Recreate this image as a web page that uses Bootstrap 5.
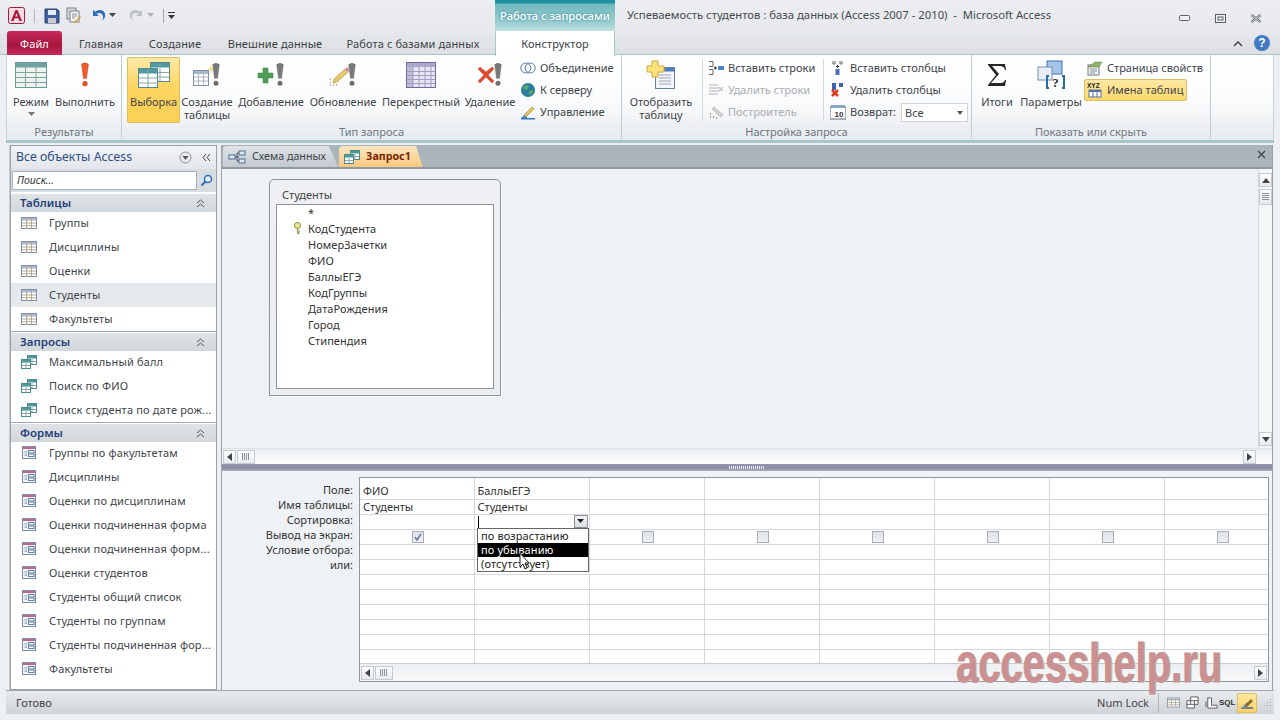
<!DOCTYPE html>
<html lang="ru">
<head>
<meta charset="utf-8">
<title>Access</title>
<link rel="stylesheet" href="https://cdn.jsdelivr.net/npm/bootstrap@5.3.0/dist/css/bootstrap.min.css">
<style>
html,body{margin:0;width:1280px;height:720px;overflow:hidden}
body{background:#edf0f3;font-family:"Noto Sans","Open Sans",sans-serif;font-size:11px;color:#3b4148;line-height:1.2;position:relative}
svg{display:block;flex:none}
.win{width:1280px;height:720px;display:flex;flex-direction:column}
.titlebar{height:31px;background:linear-gradient(#eceef1,#e6e8eb);display:flex;align-items:center;flex:none}
.qat{padding-left:8px;gap:5px;width:495px}
.ctx{width:120px;height:31px;background:linear-gradient(#1d8fa0 0 3px,#6fb7bd 4px,#a4d4d6 26px,#c6e4e4);color:#fff;font-size:11.2px;font-weight:500;text-align:center;line-height:32px;text-shadow:0 0 3px #2d7f8c}
.wintitle{padding-left:12px;font-size:11.3px;color:#454a50;margin-top:-2px;flex:1}
.winbtn{gap:24px;padding-right:18px;margin-top:6px}
.tabs{height:24px;background:linear-gradient(#e6e8eb,#dcdfe3);display:flex;flex:none;position:relative;border-bottom:1px solid #a9c5ca;padding-left:7px}
.tab{font-size:11px;height:24px;line-height:25px;text-align:center;color:#3a3f45;letter-spacing:.01em;flex:none}
.t-file{width:55px;background:linear-gradient(#c92a5c,#a6173f 60%,#c5295a);color:#fff;border-radius:3px 3px 0 0;font-size:11px}
.t1{width:78px}.t2{width:70px}.t3{width:130px}.t4{width:146px}
.t-act{width:120px;height:25px;background:linear-gradient(#fff,#fdfefe);border:1px solid #a9c5ca;border-top:0;border-bottom:0;margin-left:9px;color:#3a3f45;position:relative;z-index:2}
.qhelp{position:absolute;right:10px;top:4px;gap:11px;display:flex;align-items:center}
.ribbon{height:85px;flex:none;background:linear-gradient(#fff 0,#fafbfc 55%,#e6eaee);border-left:1px solid #c5d3d6;margin-left:6px;margin-right:6px;display:flex;border-right:1px solid #c5d3d6}
.group{height:84px;position:relative;display:flex;border-right:1px solid #bcd0d3;padding-top:2px;flex:none}
.g-label{position:absolute;left:0;right:0;bottom:-1px;height:16px;text-align:center;color:#6d767e;font-size:11px;line-height:16px}
.g1{width:115px;padding-left:1px}.g2{width:500px;padding-left:5px}.g3{width:350px;padding-left:4px}.g4{width:239px}
.big{display:flex;flex-direction:column;align-items:center;text-align:center;height:66px;padding-top:5px;border-radius:2px;color:#3e444a;flex:none}
.big .ic{height:26px;display:flex;align-items:center;justify-content:center;margin-bottom:7px;flex:none}
.big small{font-size:11px;line-height:13px}
.b-on{background:linear-gradient(#fde9a8,#fdd661 45%,#fbcf55);box-shadow:inset 0 0 0 1px #e0bc62;color:#3e444a}
.w46{width:46px}.w62{width:62px}.w53{width:53px}.w54{width:54px}.w74{width:74px}.w70{width:70px}.w86{width:86px}.w52{width:52px}.w50{width:50px}.w58{width:58px}
.smalls{display:flex;flex-direction:column;flex:none}
.c115{width:115px}
.s{height:22px;display:flex;align-items:center;gap:4px;white-space:nowrap;font-size:11px;color:#3e444a}
.s.off{color:#a9adb2}
.g4 .s{padding:0 4px 0 3px;gap:4px;align-self:flex-start}
.s.on{background:linear-gradient(#fdeaa9,#fdd866);box-shadow:inset 0 0 0 1px #e0bc62;border-radius:3px}
.s svg{width:16px;height:16px}
.vr-s{width:1px;background:#cfd8dc;height:62px;margin-top:2px;flex:none}
.m65{margin-left:6px;margin-right:5px}
.m06{margin-right:6px}
.combo{width:67px;height:19px;background:#fff;border:1px solid #cdd4d9;margin-left:1px;padding-left:3px;line-height:17px;position:relative}
.combo i{position:absolute;right:4px;top:7px;border:3px solid transparent;border-top:4px solid #555}
.rib-line{height:3px;flex:none;background:#a9c5ca;margin:0 6px}
.main{flex:1;display:flex;padding:2px 8px 0 10px;gap:4px;min-height:0}
.nav-pane{width:207px;height:545px;background:#fff;border:1px solid #9aa2a9;box-shadow:-1px 0 0 #c8cdd2;flex:none;display:flex;flex-direction:column}
.nav-head{height:23px;background:linear-gradient(#f1f3f6,#e3e6ea);display:flex;align-items:center;padding:0 5px;color:#2d4f86;font-size:12.3px;flex:none}
.mr10{margin-right:10px}
.nav-search{height:23px;background:#d8dde2;display:flex;align-items:center;padding:0 1px;flex:none}
.nav-search div{flex:1;height:19px;background:#fff;border:1px solid #aab1b8;font-style:italic;padding-left:4px;font-size:10.5px;line-height:17px;color:#333}
.nav-search svg{margin:0 2px 0 3px}
.nav-cat{height:18px;background:linear-gradient(#dfe3e7,#d2d7dc);display:flex;align-items:center;justify-content:space-between;padding:0 11px 0 9px;color:#1f3f78;font-weight:600;font-size:11.5px;flex:none;margin-top:1px;position:relative;z-index:1}
.nav-search + .nav-cat{margin-top:2px}
.nav-item{height:24px;display:flex;align-items:center;padding-left:10px;gap:12px;white-space:nowrap;font-size:11px;color:#3e444a;flex:none;overflow:hidden;letter-spacing:.015em}
.nav-item.sel{background:#e6e9ec}
.nav-list{border-bottom:1px solid #a0a7ad;padding:0;margin:-1px 0 0;list-style:none}
.nav-list.end{border:0}
.doc{flex:1;display:flex;flex-direction:column;height:546px;border:1px solid #9aa2a9;border-top:0;min-width:0;margin-right:-1px}
.doctabs{height:24px;flex:none;background:#aab4bb;border-bottom:2px solid #8f999f;display:flex;align-items:flex-end;padding-left:1px;position:relative}
.dt{height:21px;display:flex;align-items:center;gap:6px;font-size:10.7px;padding:0 12px 0 5px;border-radius:4px 4px 0 0;background:linear-gradient(#dfe3e6,#c3cacf);color:#3e444a;margin-right:1px;clip-path:polygon(0 0,92% 0,100% 100%,0 100%)}
.dt.on{background:linear-gradient(#fbe6c2,#f8c87d);color:#7a1f00;font-weight:700;padding-right:12px}
.dt-x{position:absolute;right:6px;top:5px}
.qpane{flex:1;display:flex;flex-direction:column;min-height:0;background:#eef2f5}
.canvas{flex:1;position:relative;display:flex;min-height:0}
.tbox{position:absolute;left:47px;top:10px;width:232px;height:217px;border:1px solid #8d9399;border-radius:5px 5px 0 0;background:linear-gradient(#eef0f3,#eceff2);padding:6px 6px 6px 6px;box-shadow:1px 1px 0 #fff}
.tbox h6{font-size:11px;font-weight:400;margin:1px 0 1px 6px;line-height:16px;color:#444}
.tbox ul{list-style:none;margin:0;padding:0 0 0 31px;background:#fff;border:1px solid #8d9399;height:185px;position:relative}
.tbox li{height:16px;line-height:16px;font-size:11px;color:#333;letter-spacing:.005em}
.key{position:absolute;left:16px;top:17px}
.vs{width:14px;flex:none;background:#f4f6f8;border-left:1px solid #d5dade;display:flex;flex-direction:column;align-items:center;padding:4px 0 2px}
.sb-btn{width:13px;height:14px;background:linear-gradient(#fff,#e8ebee);border:1px solid #c5cbd0;display:flex;align-items:center;justify-content:center;flex:none}
.sb-thumb{width:13px;height:16px;background:linear-gradient(#fff,#e4e8eb);border:1px solid #c5cbd0;margin-top:2px;display:flex;align-items:center;justify-content:center}
.hgrip{display:block;width:7px;height:8px;background:repeating-linear-gradient(#8b9096 0 1px,transparent 1px 2px)}
.hs{height:16px;flex:none;background:linear-gradient(#eceff2,#fdfdfe);display:flex;align-items:center;padding:0 16px 0 1px;justify-content:space-between;border-top:1px solid #dde1e5}
.hs-l{display:flex;gap:1px}
.grip{display:block;width:8px;height:7px;background:repeating-linear-gradient(90deg,#8b9096 0 1px,transparent 1px 2px)}
.splitter{height:7px;flex:none;background:linear-gradient(#9295ad,#8a8da6 60%,#aab0bf);display:flex;align-items:center;justify-content:center}
.dots{width:36px;height:3px;background:repeating-linear-gradient(90deg,#e8eaf2 0 1px,transparent 1px 2px)}
.gpane{flex:none;height:219px;display:flex;padding:6px 3px 0 0;background:#eef2f5;position:relative}
.labels{width:137px;padding-top:5px;flex:none;text-align:right;padding-right:6px;color:#333;font-size:11px}
.labels div{height:15px;line-height:15px}
.gridbox{width:910px;height:205px;background:#fff;border:1px solid #8f959b;display:flex;flex-direction:column;overflow:hidden;position:relative}
table.qbe{margin:0;table-layout:fixed;border-collapse:collapse;width:919px;font-size:11px;color:#333;--bs-table-bg:transparent}
table.qbe td{border:1px solid #d5d9dd;border-top:0;padding:0 0 0 3px;height:15px;line-height:14px;width:115px;white-space:nowrap;overflow:hidden;position:relative}
table.qbe tr:first-child td{height:21px;padding-top:6px}
table.qbe tr:first-child td:first-child{width:114px}
table.qbe td:first-child{border-left:0}
.hs2{position:absolute;left:0;right:0;bottom:0;height:18px;background:linear-gradient(#eceff2,#f8f9fa);display:flex;align-items:center;justify-content:space-between;padding:0 1px;border-top:1px solid #c6cbd0}
.cb{display:block;width:12px;height:12px;margin:0 0 0 49px;background:linear-gradient(#dfe3ea,#eef0f4);border:1px solid #a9adb5}
.combo-btn{position:absolute;right:1px;top:0;width:14px;height:13px;background:linear-gradient(#f3f4f6,#d9dde1);border:1px solid #8d9399;display:flex;align-items:center;justify-content:center}
.caret-bar{position:absolute;left:3px;top:1px;width:1px;height:12px;background:#000}
.dd{position:absolute;left:477px;top:528px;width:112px;height:44px;background:#fff;border:1px solid #666;font-size:11px;color:#222;z-index:5;letter-spacing:.01em}
.dd div{height:14px;line-height:14px;padding-left:3px}
.dd .hl{background:#000;color:#fff}
.cursor{position:absolute;left:519px;top:552px;z-index:6}
.status{height:24px;flex:none;margin:1px 6px 6px 6px;background:linear-gradient(#e8ebee,#cfd3d8);border-top:1px solid #a0a6ac;display:flex;align-items:center;padding-left:10px;font-size:11px;color:#444;justify-content:space-between}
.status-r{display:flex;align-items:center;gap:6px;padding-right:2px}
.status-r .sep{width:1px;height:20px;background:#b0b5ba;margin:0 2px 0 3px}
.sql{font-size:8px;font-weight:800;color:#333;font-family:"Liberation Sans",sans-serif;margin-left:-5px;width:15px}
.act{width:20px;height:20px;background:linear-gradient(#fdeaa9,#fbd05a);box-shadow:inset 0 0 0 1px #e0bc62;border-radius:2px;display:flex;align-items:center;justify-content:center;margin-left:-3px}
.wm{position:absolute;left:956px;top:631px;font:700 55px/64px "Liberation Sans",sans-serif;color:#cb9092;transform:scaleX(.725);transform-origin:0 0;z-index:7;white-space:nowrap;-webkit-text-stroke:.8px #cb9092;text-shadow:1.500px 0 0 #a6c79f}
</style>
</head>
<body>
<svg width="0" height="0" style="position:absolute">
<defs>
<symbol id="i-tbl" viewBox="0 0 16 16"><rect x=".5" y="2.5" width="15" height="11" fill="#fff" stroke="#7e8fa5"/><rect x="1" y="3" width="14" height="2.5" fill="#aab9cf"/><path d="M1 8h14M1 10.800h14M5.500 3v10M10.500 3v10" stroke="#b2a98a"/></symbol>
<symbol id="i-qry" viewBox="0 0 16 16"><rect x="6.500" y="1.500" width="9" height="9" fill="#fff" stroke="#4c8a8e"/><rect x="7" y="2" width="8" height="2.500" fill="#4c9a9c"/><path d="M11 5v5M7 7.500h8" stroke="#92a7ab"/><rect x=".5" y="5.500" width="9" height="9" fill="#fff" stroke="#4c8a8e"/><rect x="1" y="6" width="8" height="2.500" fill="#4c9a9c"/><path d="M5 9v5M1 11.500h8" stroke="#92a7ab"/></symbol>
<symbol id="i-frm" viewBox="0 0 16 16"><rect x="1.500" y="1.500" width="13" height="12" fill="#eef5fa" stroke="#7e8fa5"/><rect x="2" y="2" width="12" height="2" fill="#c2668f"/><path d="M3.500 7h2.500M3.500 10h2.500" stroke="#5f7fa8"/><rect x="7.500" y="5.500" width="5.500" height="2.500" fill="#fff" stroke="#5f7fa8"/><rect x="7.500" y="9" width="5.500" height="2.500" fill="#fff" stroke="#5f7fa8"/></symbol>
<symbol id="i-bang" viewBox="0 0 12 30"><path d="M2 2.500Q6 -.5 10 2.500L7.800 19H4.200Z" fill="#77797b" stroke="#5f6163" stroke-width=".5"/><circle cx="6" cy="25" r="3" fill="#6d6f71"/></symbol>
<symbol id="i-chev2" viewBox="0 0 9 9"><path d="M1 4l3.500-3L8 4M1 8l3.500-3L8 8" fill="none" stroke="#555" stroke-width="1"/></symbol>
</defs>
</svg>
<div class="win">
  <div class="titlebar">
    <div class="d-flex align-items-center qat">
      <svg width="17" height="17" viewBox="0 0 17 17"><rect x=".5" y=".5" width="16" height="16" rx="2" fill="#f3dbe1" stroke="#9a1c3e"/><path d="M3 14L7.500 3h2L14 14h-2.500l-1-2.700H6.500L5.500 14ZM7.200 9.500h2.600L8.500 6Z" fill="#a41538"/></svg>
      <span class="d-block ms-1 me-1" style="width:1px;height:14px;background:#b5b9be"></span>
      <svg width="16" height="16" viewBox="0 0 16 16"><path d="M1 1h12l2 2v12H1Z" fill="#3f5f9e" stroke="#2c4273"/><rect x="4" y="2" width="8" height="5" fill="#e6edf6"/><rect x="4" y="10" width="8" height="5" fill="#c8ccd4"/></svg>
      <svg width="17" height="17" viewBox="0 0 17 17"><rect x="2" y="1" width="9" height="11" fill="#d8dde2" stroke="#7a7f86"/><rect x="5" y="4" width="9" height="11" fill="#f4f4f2" stroke="#7a7f86"/><path d="M7 7h5M7 9h5M7 11h3" stroke="#8a8f96"/><path d="M9 15l6-6 1 1-6 6h-1Z" fill="#d8a040"/></svg>
      <svg width="15" height="15" viewBox="0 0 15 15" class="ms-1"><path d="M2 2v6h6L5.500 5.800C8 4 11 5 12 8c.4 1.500 0 3-1 4.500 3-1.500 4-5 2.500-8C12 1.500 7.500 1 4.300 3.700Z" fill="#2f6db7"/></svg>
      <svg width="7" height="5" viewBox="0 0 7 5" style="margin-left:-2px"><path d="M0 0h7L3.500 4Z" fill="#444"/></svg>
      <svg width="15" height="15" viewBox="0 0 15 15" class="ms-2"><path d="M13 2v6H7l2.500-2.200C7 4 4 5 3 8c-.4 1.500 0 3 1 4.500-3-1.500-4-5-2.500-8C3 1.500 7.500 1 10.700 3.700Z" fill="#bac3c9"/></svg>
      <svg width="7" height="5" viewBox="0 0 7 5" style="margin-left:-2px"><path d="M0 0h7L3.500 4Z" fill="#b0b4b8"/></svg>
      <span class="d-block ms-1" style="width:1px;height:14px;background:#9fa4a9"></span>
      <svg width="8" height="7" viewBox="0 0 8 7" style="margin-left:-1px"><path d="M0 0h7v1H0ZM0 3h7L3.500 7Z" fill="#333"/></svg>
    </div>
    <div class="ctx">Работа с запросами</div>
    <div class="wintitle">Успеваемость студентов : база данных (Access 2007 - 2010)&nbsp; -&nbsp; Microsoft Access</div>
    <div class="d-flex align-items-center winbtn">
      <svg width="12" height="7" viewBox="0 0 12 7"><rect x=".5" y=".5" width="10" height="5" rx="1" fill="#eef0f2" stroke="#5a6066"/></svg>
      <svg width="11" height="9" viewBox="0 0 11 9"><rect x=".5" y=".5" width="10" height="8" fill="#eef0f2" stroke="#5a6066"/><rect x="3" y="3" width="5" height="3" fill="none" stroke="#5a6066"/></svg>
      <svg width="12" height="9" viewBox="0 0 12 9"><path d="M1.500 1l9 7M10.500 1l-9 7" stroke="#6b7177" stroke-width="2.400"/><path d="M1.500 1l9 7M10.500 1l-9 7" stroke="#eef0f2" stroke-width=".8"/></svg>
    </div>
  </div>
  <div class="tabs">
    <div class="tab t-file">Файл</div>
    <div class="tab t1">Главная</div>
    <div class="tab t2">Создание</div>
    <div class="tab t3">Внешние данные</div>
    <div class="tab t4">Работа с базами данных</div>
    <div class="tab t-act">Конструктор</div>
    <div class="qhelp">
      <svg width="10" height="7" viewBox="0 0 10 7"><path d="M1 6l4-4 4 4" fill="none" stroke="#444" stroke-width="1.500"/></svg>
      <svg width="16" height="16" viewBox="0 0 16 16"><circle cx="8" cy="8" r="8" fill="#4279c3"/><text x="8" y="12" text-anchor="middle" font-size="12" font-weight="700" fill="#fff" font-family="Liberation Sans">?</text></svg>
    </div>
  </div>
  <div class="ribbon">
    <section class="group g1">
      <div class="big w46"><span class="ic"><svg width="32" height="26" viewBox="0 0 32 26"><rect x=".5" y=".5" width="31" height="25" fill="#eef3ef" stroke="#6c9a9a"/><rect x="1" y="1" width="30" height="4.500" fill="#6fa3a3"/><path d="M10.500 1v24M21 1v24M1 10.500h30M1 15.500h30M1 20.500h30" stroke="#7ca5a0"/></svg></span><small>Режим</small><svg width="7" height="4" viewBox="0 0 7 4" class="mt-1"><path d="M0 0h7L3.500 4Z" fill="#777"/></svg></div>
      <div class="big w62"><span class="ic"><svg width="12" height="26" viewBox="0 0 12 30"><path d="M2 2.500Q6 -.5 10 2.500L7.800 19H4.200Z" fill="#ee5b2b" stroke="#c73d15" stroke-width=".5"/><circle cx="6" cy="25" r="3" fill="#e44d25"/></svg></span><small>Выполнить</small></div>
      <div class="g-label">Результаты</div>
    </section>
    <section class="group g2">
      <div class="big w53 b-on"><span class="ic"><svg width="32" height="26" viewBox="0 0 32 26"><rect x="12.500" y=".5" width="19" height="19" fill="#fff" stroke="#54898f"/><rect x="13" y="1" width="18" height="4.500" fill="#4f9aa0"/><path d="M22 1v18M13 10.500h18M13 15h18" stroke="#8aa6a5"/><rect x=".5" y="6.500" width="19" height="19" fill="#fff" stroke="#54898f"/><rect x="1" y="7" width="18" height="4.500" fill="#4f9aa0"/><path d="M10 7v18M1 16h18M1 21h18" stroke="#8aa6a5"/></svg></span><small>Выборка</small></div>
      <div class="big w54"><span class="ic"><svg width="28" height="26" viewBox="0 0 28 26"><rect x=".5" y="8.500" width="15" height="15" fill="#fff" stroke="#7c8fa5"/><rect x="1" y="9" width="14" height="3" fill="#a8b8cc"/><path d="M5.500 9v14M10.500 9v14M1 15h14M1 19h14" stroke="#a9b4c4"/><path d="M14 7l3-1 1-4 1 4 3 1-3 1-1 4-1-4Z" fill="#f2e08a"/><use href="#i-bang" x="18" y="0" width="10" height="26"/></svg></span><small>Создание<br>таблицы</small></div>
      <div class="big w74"><span class="ic"><svg width="28" height="26" viewBox="0 0 28 26"><path d="M6 6h5v5h5v5h-5v5H6v-5H1v-5h5Z" fill="#4d9d57" stroke="#3d7e46" stroke-width=".5"/><use href="#i-bang" x="18" y="0" width="10" height="26"/></svg></span><small>Добавление</small></div>
      <div class="big w70"><span class="ic"><svg width="28" height="26" viewBox="0 0 28 26"><path d="M5 17l11-10 3 3L8 20 4 21Z" fill="#e7c96a" stroke="#a58a3b" stroke-width=".6"/><path d="M1 17h1M4 23h1M1 20h1M1 23h1M7 23h1" stroke="#777"/><use href="#i-bang" x="18" y="0" width="10" height="26"/><path d="M16 7l3 3 2-2-3-3Z" fill="#d48aa8"/></svg></span><small>Обновление</small></div>
      <div class="big w86"><span class="ic"><svg width="30" height="26" viewBox="0 0 30 26"><rect x=".5" y=".5" width="29" height="25" fill="#e7e5f1" stroke="#6e6b99"/><rect x="1" y="1" width="28" height="4" fill="#aba9cd"/><rect x="1" y="5" width="6" height="20" fill="#bebcd9"/><path d="M7 1v24M13 1v24M19 1v24M25 1v24M1 9.500h28M1 13.500h28M1 17.500h28M1 21.500h28" stroke="#a09dc2"/></svg></span><small>Перекрестный</small></div>
      <div class="big w52"><span class="ic"><svg width="26" height="26" viewBox="0 0 26 26"><path d="M1 7l2-2 6 5 6-5 2 2-6 6 6 6-2 2-6-6-6 6-2-2 6-6Z" fill="#e34a2c" stroke="#bb3515" stroke-width=".4"/><use href="#i-bang" x="16" y="0" width="10" height="26"/></svg></span><small>Удаление</small></div>
      <div class="smalls ms-1">
        <div class="s"><svg viewBox="0 0 16 16"><circle cx="5.800" cy="8" r="5" fill="#f2f6fb" stroke="#5c7da8"/><circle cx="10.200" cy="8" r="5" fill="none" stroke="#5c7da8"/></svg>Объединение</div>
        <div class="s"><svg viewBox="0 0 16 16"><circle cx="8" cy="8" r="7" fill="#2b7f9c"/><path d="M3 5q3-3 6-1l-1 3-3 1ZM9 9l4-1-1 4-3 1Z" fill="#5aa86a"/></svg>К серверу</div>
        <div class="s"><svg viewBox="0 0 16 16"><path d="M1 14h14v1.500H1Z" fill="#2f6fc0"/><path d="M1 14L7 8v6Z" fill="#4d8bd8"/><path d="M5 10l7-7 2 2-7 7-3 1Z" fill="#e2c25a" stroke="#8f7a3a" stroke-width=".5"/></svg>Управление</div>
      </div>
      <div class="g-label">Тип запроса</div>
    </section>
    <section class="group g3">
      <div class="big w70"><span class="ic"><svg width="30" height="30" viewBox="0 0 30 30"><rect x="9.500" y="7.500" width="19" height="21" fill="#f2f5f9" stroke="#6a7f9c"/><rect x="10" y="8" width="18" height="3.500" fill="#4f7fc0"/><path d="M13 15h12M13 18h12M13 21h12M13 24h12" stroke="#9aa5b4"/><path d="M6 1h6v5h6v6h-6v5H6v-5H1V6h5Z" fill="#fbe27a" stroke="#d3a93a"/></svg></span><small>Отобразить<br>таблицу</small></div>
      <div class="vr-s m65"></div>
      <div class="smalls c115">
        <div class="s"><svg viewBox="0 0 16 16"><path d="M1 1.500h4v5H1M1 9.500h4v5H1" fill="none" stroke="#666"/><path d="M6 8h3" stroke="#333"/><path d="M6 8l2-2v4Z" fill="#333"/><rect x="10" y="6" width="6" height="4" fill="#4e82c8"/></svg>Вставить строки</div>
        <div class="s off"><svg viewBox="0 0 16 16"><path d="M1 3h9M1 6h10M1 9h10M1 12h9" stroke="#c8cbce" stroke-width="1.500"/><path d="M11 5l4 4M15 5l-4 4" stroke="#c6c9cc" stroke-width="1.500"/></svg>Удалить строки</div>
        <div class="s off"><svg viewBox="0 0 16 16"><path d="M6 3l9 8-2 2-9-8Z" fill="#d0d3d6" stroke="#a6a9ad" stroke-width=".6"/><path d="M2 13h1M5 13h1M8 14h1M2 10h1" stroke="#777" stroke-width="1.500"/></svg>Построитель</div>
      </div>
      <div class="vr-s m06"></div>
      <div class="smalls">
        <div class="s"><svg viewBox="0 0 16 16"><path d="M3 1v3h2V1M10 1v3h2V1" fill="none" stroke="#666"/><path d="M7.500 5v3" stroke="#333"/><path d="M5.500 7l2-2 2 2Z" fill="#333"/><rect x="5.500" y="9" width="4" height="6" fill="#4e6fb8"/></svg>Вставить столбцы</div>
        <div class="s"><svg viewBox="0 0 16 16"><rect x="2" y="1" width="4" height="7" fill="#3d62b0"/><rect x="9" y="1" width="4" height="4" fill="#3d62b0"/><path d="M2 8l6 6M8 8l-6 6" stroke="#e23a1b" stroke-width="2.500"/></svg>Удалить столбцы</div>
        <div class="s"><svg viewBox="0 0 16 16"><rect x="0" y="3" width="16" height="12" fill="#fff" stroke="#667"/><rect x="1" y="1" width="14" height="3" fill="#8aa7c5"/><text x="9" y="12.500" font-size="8" font-weight="700" text-anchor="middle" font-family="Liberation Sans" fill="#333">10</text></svg>Возврат:<div class="combo">Все<i></i></div></div>
      </div>
      <div class="g-label">Настройка запроса</div>
    </section>
    <section class="group g4">
      <div class="big w50"><span class="ic"><svg width="20" height="24" viewBox="0 0 20 24"><path d="M1 1h17l1 6h-1c-1-3-2-4-5-4H5l7 8-8 9h10c2 0 3-1 4-3h1l-1 6H1v-1l8-10L1 2Z" fill="#262626"/></svg></span><small>Итоги</small></div>
      <div class="big w58"><span class="ic"><svg width="28" height="30" viewBox="0 0 28 30"><rect x="10" y="1" width="15" height="13" fill="#a4c5e8" stroke="#3d75b5"/><rect x="1" y="7" width="14" height="13" fill="#e8eef6" stroke="#6e8fb5"/><path d="M12 16h-2v12h2M25 16h2v12h-2" fill="none" stroke="#2c6ab0" stroke-width="2"/><text x="18.500" y="27" font-size="13" font-weight="700" text-anchor="middle" fill="#333" font-family="Liberation Serif">?</text></svg></span><small>Параметры</small></div>
      <div class="smalls ms-1">
        <div class="s"><svg viewBox="0 0 16 16"><rect x="1" y="5" width="11" height="10" fill="#f4f4f0" stroke="#6f7c86"/><path d="M1 7L8 2h7l-3 5Z" fill="#8fb26a" stroke="#5f8240" stroke-width=".5"/><path d="M3 9h7M3 11h7M3 13h5" stroke="#88929c"/></svg>Страница свойств</div>
        <div class="s on"><svg viewBox="0 0 16 16"><text x="0" y="6" font-size="6.500" font-weight="700" font-family="Liberation Sans" fill="#222">XYZ</text><rect x="2" y="8" width="12" height="7" fill="#fff" stroke="#5870a5"/><rect x="2" y="8" width="12" height="2" fill="#5870a5"/><path d="M6 10v5M10 10v5" stroke="#5870a5"/></svg>Имена таблиц</div>
      </div>
      <div class="g-label">Показать или скрыть</div>
    </section>
  </div>
  <div class="rib-line"></div>
  <div class="main">
    <nav class="nav-pane">
      <div class="nav-head"><span class="flex-fill">Все объекты Access</span>
        <svg width="13" height="13" viewBox="0 0 13 13" class="mr10"><circle cx="6.500" cy="6.500" r="5.500" fill="#e8eaed" stroke="#8d9298"/><path d="M3.500 5h6l-3 4Z" fill="#555"/></svg>
        <svg width="9" height="9" viewBox="0 0 9 9"><path d="M4 1L1 4.500 4 8M8 1L5 4.500 8 8" fill="none" stroke="#444"/></svg>
      </div>
      <div class="nav-search"><div>Поиск...</div><svg width="13" height="13" viewBox="0 0 13 13"><circle cx="8" cy="5" r="3.500" fill="#e6f0fa" stroke="#2f6eb5" stroke-width="1.500"/><path d="M5.500 7.500L1.500 11.500" stroke="#2f6eb5" stroke-width="2"/></svg></div>
      <div class="nav-cat">Таблицы <svg width="9" height="9"><use href="#i-chev2"/></svg></div>
      <ul class="nav-list">
        <li class="nav-item"><svg width="16" height="16"><use href="#i-tbl"/></svg>Группы</li>
        <li class="nav-item"><svg width="16" height="16"><use href="#i-tbl"/></svg>Дисциплины</li>
        <li class="nav-item"><svg width="16" height="16"><use href="#i-tbl"/></svg>Оценки</li>
        <li class="nav-item sel"><svg width="16" height="16"><use href="#i-tbl"/></svg>Студенты</li>
        <li class="nav-item"><svg width="16" height="16"><use href="#i-tbl"/></svg>Факультеты</li>
      </ul>
      <div class="nav-cat">Запросы <svg width="9" height="9"><use href="#i-chev2"/></svg></div>
      <ul class="nav-list">
        <li class="nav-item"><svg width="16" height="16"><use href="#i-qry"/></svg>Максимальный балл</li>
        <li class="nav-item"><svg width="16" height="16"><use href="#i-qry"/></svg>Поиск по ФИО</li>
        <li class="nav-item"><svg width="16" height="16"><use href="#i-qry"/></svg>Поиск студента по дате рож...</li>
      </ul>
      <div class="nav-cat">Формы <svg width="9" height="9"><use href="#i-chev2"/></svg></div>
      <ul class="nav-list end">
        <li class="nav-item"><svg width="16" height="16"><use href="#i-frm"/></svg>Группы по факультетам</li>
        <li class="nav-item"><svg width="16" height="16"><use href="#i-frm"/></svg>Дисциплины</li>
        <li class="nav-item"><svg width="16" height="16"><use href="#i-frm"/></svg>Оценки по дисциплинам</li>
        <li class="nav-item"><svg width="16" height="16"><use href="#i-frm"/></svg>Оценки подчиненная форма</li>
        <li class="nav-item"><svg width="16" height="16"><use href="#i-frm"/></svg>Оценки подчиненная форм...</li>
        <li class="nav-item"><svg width="16" height="16"><use href="#i-frm"/></svg>Оценки студентов</li>
        <li class="nav-item"><svg width="16" height="16"><use href="#i-frm"/></svg>Студенты общий список</li>
        <li class="nav-item"><svg width="16" height="16"><use href="#i-frm"/></svg>Студенты по группам</li>
        <li class="nav-item"><svg width="16" height="16"><use href="#i-frm"/></svg>Студенты подчиненная фор...</li>
        <li class="nav-item"><svg width="16" height="16"><use href="#i-frm"/></svg>Факультеты</li>
      </ul>
    </nav>
    <div class="doc">
      <div class="doctabs">
        <div class="dt"><svg width="18" height="14" viewBox="0 0 18 14"><rect x="1" y="5" width="6" height="4" fill="#dfe6ee" stroke="#4b6f9c"/><rect x="11" y="1" width="6" height="4" fill="#dfe6ee" stroke="#4b6f9c"/><rect x="11" y="9" width="6" height="4" fill="#dfe6ee" stroke="#4b6f9c"/><path d="M7 7h4M9 3v8h2M9 3h2" fill="none" stroke="#555"/></svg>Схема данных</div>
        <div class="dt on"><svg width="16" height="16"><use href="#i-qry"/></svg>Запрос1</div>
        <svg class="dt-x" width="9" height="9" viewBox="0 0 9 9"><path d="M1 1l7 7M8 1l-7 7" stroke="#3e4449" stroke-width="1.300"/></svg>
      </div>
      <div class="qpane">
        <div class="canvas">
          <div class="flex-fill position-relative">
            <div class="tbox">
              <h6>Студенты</h6>
              <ul>
                <li>*</li>
                <li>КодСтудента</li>
                <li>НомерЗачетки</li>
                <li>ФИО</li>
                <li>БаллыЕГЭ</li>
                <li>КодГруппы</li>
                <li>ДатаРождения</li>
                <li>Город</li>
                <li>Стипендия</li>
                <svg class="key" width="9" height="13" viewBox="0 0 9 13"><circle cx="4.500" cy="3.500" r="3" fill="#f0e88a" stroke="#8b8a3c"/><path d="M4.500 6v6l2-1-1-1 1-1-2-1" fill="#e4d56a" stroke="#8b8a3c" stroke-width=".8"/></svg>
              </ul>
            </div>
          </div>
          <div class="vs">
            <div class="sb-btn"><svg width="8" height="5" viewBox="0 0 8 5"><path d="M0 5h8L4 0Z" fill="#444"/></svg></div>
            <div class="sb-thumb"><i class="hgrip"></i></div>
            <div class="flex-fill"></div>
            <div class="sb-btn"><svg width="8" height="5" viewBox="0 0 8 5"><path d="M0 0h8L4 5Z" fill="#444"/></svg></div>
          </div>
        </div>
        <div class="hs">
          <div class="hs-l"><div class="sb-btn"><svg width="5" height="8" viewBox="0 0 5 8"><path d="M5 0v8L0 4Z" fill="#444"/></svg></div><div class="sb-btn w-auto px-1"><i class="grip"></i></div></div>
          <div class="sb-btn"><svg width="5" height="8" viewBox="0 0 5 8"><path d="M0 0v8l5-4Z" fill="#444"/></svg></div>
        </div>
        <div class="splitter"><div class="dots"></div></div>
        <div class="gpane">
          <div class="labels">
            <div>Поле:</div><div>Имя таблицы:</div><div>Сортировка:</div><div>Вывод на экран:</div><div>Условие отбора:</div><div>или:</div>
          </div>
          <div class="gridbox">
            <table class="qbe">
              <tbody>
                <tr><td>ФИО</td><td>БаллыЕГЭ</td><td></td><td></td><td></td><td></td><td></td><td></td></tr>
                <tr><td>Студенты</td><td>Студенты</td><td></td><td></td><td></td><td></td><td></td><td></td></tr>
                <tr><td></td><td><span class="caret-bar"></span><span class="combo-btn"><svg width="7" height="5" viewBox="0 0 7 5"><path d="M0 0h7L3.500 4Z" fill="#222"/></svg></span></td><td></td><td></td><td></td><td></td><td></td><td></td></tr>
                <tr>
                  <td><span class="cb"><svg width="10" height="10" viewBox="0 0 10 10"><path d="M2 5l2 3 4-6" fill="none" stroke="#6b7fb0" stroke-width="1.600"/></svg></span></td>
                  <td></td><td><span class="cb"></span></td><td><span class="cb"></span></td><td><span class="cb"></span></td><td><span class="cb"></span></td><td><span class="cb"></span></td><td><span class="cb"></span></td></tr>
                <tr><td></td><td></td><td></td><td></td><td></td><td></td><td></td><td></td></tr>
                <tr><td></td><td></td><td></td><td></td><td></td><td></td><td></td><td></td></tr>
                <tr><td></td><td></td><td></td><td></td><td></td><td></td><td></td><td></td></tr>
                <tr><td></td><td></td><td></td><td></td><td></td><td></td><td></td><td></td></tr>
                <tr><td></td><td></td><td></td><td></td><td></td><td></td><td></td><td></td></tr>
                <tr><td></td><td></td><td></td><td></td><td></td><td></td><td></td><td></td></tr>
                <tr><td></td><td></td><td></td><td></td><td></td><td></td><td></td><td></td></tr>
                <tr><td></td><td></td><td></td><td></td><td></td><td></td><td></td><td></td></tr>
              </tbody>
            </table>
            <div class="hs2">
              <div class="hs-l"><div class="sb-btn"><svg width="5" height="8" viewBox="0 0 5 8"><path d="M5 0v8L0 4Z" fill="#444"/></svg></div><div class="sb-btn w-auto px-1"><i class="grip"></i></div></div>
              <div class="sb-btn"><svg width="5" height="8" viewBox="0 0 5 8"><path d="M0 0v8l5-4Z" fill="#444"/></svg></div>
            </div>
          </div>
        </div>
      </div>
    </div>
  </div>
  <div class="status">
    <span>Готово</span>
    <div class="status-r">
      <span>Num Lock</span><span class="sep"></span>
      <svg width="13" height="13"><use href="#i-tbl"/></svg>
      <svg width="13" height="13" viewBox="0 0 14 14"><path d="M5 1h8v8H9v4H1V5h4Z" fill="#fff" stroke="#555"/><path d="M5 5h4v4H5ZM9 5h4M5 9H1" fill="none" stroke="#555"/></svg>
      <svg width="13" height="13" viewBox="0 0 14 14"><path d="M3 2h4v8h6v3H3ZM1 12V6" fill="#fff" stroke="#555"/></svg>
      <span class="sql">SQL</span>
      <span class="act"><svg width="14" height="14" viewBox="0 0 14 14"><path d="M1 12h12" stroke="#3a62b0" stroke-width="1.500"/><path d="M1 12L7 6v6Z" fill="#7da0d8"/><path d="M5 9l6-6 2 2-6 6-3 1Z" fill="#8a6d2b"/></svg></span>
      <svg width="9" height="9" viewBox="0 0 9 9"><path d="M7 1h1v1H7ZM4 4h1v1H4ZM7 4h1v1H7ZM1 7h1v1H1ZM4 7h1v1H4ZM7 7h1v1H7Z" fill="#9aa0a6"/></svg>
    </div>
  </div>
</div>
<div class="dd"><div>по возрастанию</div><div class="hl">по убыванию</div><div>(отсутствует)</div></div>
<svg class="cursor" width="12" height="18" viewBox="0 0 12 18"><path d="M1 1v14l3-3 2 5 2-1-2-5h4Z" fill="#fff" stroke="#222"/></svg>
<div class="wm">accesshelp.ru</div>
</body>
</html>
